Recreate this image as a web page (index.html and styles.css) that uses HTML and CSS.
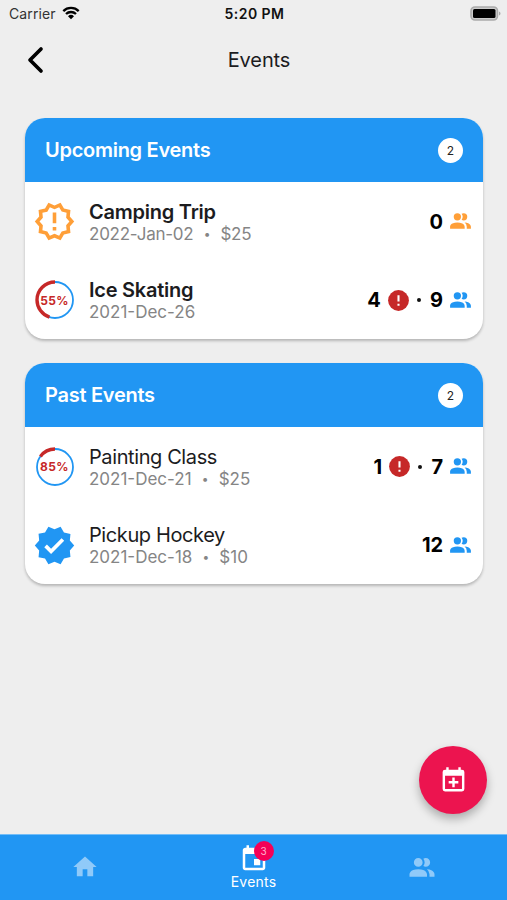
FILE: index.html
```html
<!DOCTYPE html>
<html lang="en">
<head>
<meta charset="utf-8">
<title>Events</title>
<link rel="stylesheet" href="styles.css">
</head>
<body>
<svg class="defs" aria-hidden="true">
  <symbol id="people" viewBox="0 0 24 24"><path d="M16 17v2H2v-2s0-4 7-4 7 4 7 4m-3.500-9.500a3.500 3.500 0 1 0-7 0 3.500 3.500 0 0 0 7 0m3.440 5.500A5.320 5.320 0 0 1 18 17v2h4v-2s0-3.630-6.060-4M15 4a3.390 3.390 0 0 0-1.930.59 5 5 0 0 1 0 5.820A3.390 3.390 0 0 0 15 11a3.500 3.500 0 0 0 0-7z"/></symbol>
  <symbol id="alert" viewBox="0 0 24 24"><circle cx="12" cy="12" r="10"/><path d="M11 7h2v6h-2zm0 8h2v2h-2z" fill="#fff"/></symbol>
</svg>
<div class="screen">
  <div class="status">
    <div class="carrier">Carrier
      <svg class="wifi" viewBox="0 0 18 14"><path d="M1.300 5.100a11 11 0 0 1 15.400 0M4 8a7.200 7.200 0 0 1 10 0" fill="none" stroke="#000" stroke-width="2.300"/><path d="M6 10.200a4.300 4.300 0 0 1 6 0L9 13.300z"/></svg>
    </div>
    <div class="time">5:20 PM</div>
    <svg class="battery" viewBox="0 0 31 16"><rect x="1" y="1" width="26.500" height="13" rx="4" fill="#ccc" stroke="#aaa" stroke-width="1.600"/><rect x="3" y="3" width="22.500" height="9" rx="1.500"/><path d="M29 5.500c2 .8 2 3.200 0 4z" fill="#aaa"/></svg>
  </div>
  <header class="bar">
    <svg class="back" viewBox="0 0 18 28"><path d="M15 3L4 14l11 11" fill="none" stroke="#000" stroke-width="3.700" stroke-linecap="round" stroke-linejoin="round"/></svg>
    <h1>Events</h1>
  </header>
  <main>
    <section class="card">
      <div class="card-head"><h2>Upcoming Events</h2><span class="count">2</span></div>
      <div class="row">
        <svg class="seal orange" viewBox="0 0 24 24"><path d="M23 12l-2.440-2.780.34-3.680-3.610-.82-1.890-3.180L12 3 8.600 1.540 6.710 4.720l-3.610.81.34 3.680L1 12l2.440 2.780-.34 3.690 3.610.82 1.890 3.180L12 21l3.400 1.460 1.890-3.180 3.610-.82-.34-3.680L23 12zm-4.510 2.110l.26 2.790-2.740.62-1.430 2.410L12 18.820l-2.580 1.110-1.430-2.410-2.740-.62.26-2.800L3.660 12l1.850-2.120-.26-2.780 2.740-.61 1.430-2.410L12 5.180l2.580-1.110 1.430 2.410 2.740.62-.26 2.790L20.340 12l-1.850 2.110zM11 15h2v2h-2zm0-8h2v6h-2z"/></svg>
        <div class="info strong"><h3>Camping Trip</h3><p class="tight">2022-Jan-02<i>•</i>$25</p></div>
        <div class="stats"><b>0</b><svg class="people orange"><use href="#people"/></svg></div>
      </div>
      <div class="row">
        <div class="ring"><svg viewBox="0 0 40 40"><circle class="track" cx="20" cy="20" r="18"/><circle class="due" cx="20" cy="20" r="18" pathLength="100" stroke-dasharray="0 55 45 0"/></svg><span>55%</span></div>
        <div class="info strong"><h3>Ice Skating</h3><p>2021-Dec-26</p></div>
        <div class="stats"><b>4</b><svg class="alert"><use href="#alert"/></svg><em></em><b>9</b><svg class="people"><use href="#people"/></svg></div>
      </div>
    </section>
    <section class="card">
      <div class="card-head"><h2>Past Events</h2><span class="count">2</span></div>
      <div class="row">
        <div class="ring"><svg viewBox="0 0 40 40"><circle class="track" cx="20" cy="20" r="18"/><circle class="due" cx="20" cy="20" r="18" pathLength="100" stroke-dasharray="0 85 15 0"/></svg><span>85%</span></div>
        <div class="info"><h3>Painting Class</h3><p>2021-Dec-21<i>•</i>$25</p></div>
        <div class="stats"><b>1</b><svg class="alert"><use href="#alert"/></svg><em></em><b>7</b><svg class="people"><use href="#people"/></svg></div>
      </div>
      <div class="row">
        <svg class="seal" viewBox="0 0 24 24"><path d="M23 12l-2.440-2.790.34-3.690-3.610-.82-1.890-3.200L12 2.960 8.600 1.500 6.710 4.690 3.100 5.500l.34 3.700L1 12l2.440 2.790-.34 3.700 3.610.82L8.600 22.500l3.400-1.470 3.400 1.460 1.890-3.190 3.610-.82-.34-3.690L23 12zm-12.910 4.720l-3.800-3.810 1.480-1.480 2.320 2.330 5.850-5.870 1.480 1.480-7.330 7.350z"/></svg>
        <div class="info"><h3>Pickup Hockey</h3><p>2021-Dec-18<i>•</i>$10</p></div>
        <div class="stats"><b>12</b><svg class="people"><use href="#people"/></svg></div>
      </div>
    </section>
  </main>
  <div class="fab"><svg viewBox="0 0 24 24"><path d="M19 19V8H5v11h14M16 1h2v2h1a2 2 0 0 1 2 2v14a2 2 0 0 1-2 2H5a2 2 0 0 1-2-2V5a2 2 0 0 1 2-2h1V1h2v2h8V1m-5 8.500h2v3h3v2h-3v3h-2v-3H8v-2h3z"/></svg></div>
  <nav>
    <div class="tab"><svg class="home" viewBox="0 0 24 24"><path d="M10 20v-6h4v6h5v-8h3L12 3 2 12h3v8z"/></svg></div>
    <div class="tab active"><div class="cal"><svg viewBox="0 0 24 24"><path d="M17 12h-5v5h5v-5zM16 1v2H8V1H6v2H5c-1.110 0-1.990.9-1.990 2L3 19c0 1.100.89 2 2 2h14c1.100 0 2-.9 2-2V5c0-1.100-.9-2-2-2h-1V1h-2zm3 18H5V8h14v11z"/></svg><span class="badge">3</span></div><div class="label">Events</div></div>
    <div class="tab"><svg class="group"><use href="#people"/></svg></div>
  </nav>
</div>
</body>
</html>
```
FILE: styles.css
```css
* { box-sizing: border-box; margin: 0; padding: 0; }
body { font-family: Inter, "Liberation Sans", sans-serif; color: #1c1c1e; background: #eee; }
svg { display: block; flex: none; }
.defs { position: absolute; width: 0; height: 0; }
.screen { position: relative; width: 507px; height: 900px; display: flex; flex-direction: column; overflow: hidden; }
.status { height: 28px; display: grid; grid-template-columns: 1fr auto 1fr; align-items: center; padding: 0 6px 2px 9px; }
.carrier { display: flex; align-items: center; gap: 6px; font-size: 14px; letter-spacing: .1px; color: #333; }
.wifi { width: 18px; height: 14px; }
.time { font-size: 14px; font-weight: 600; letter-spacing: .45px; color: #111; margin-left: -1px; }
.battery { width: 31px; height: 16px; justify-self: end; margin-top: 1px; }
.bar { height: 64px; display: grid; grid-template-columns: 1fr auto 1fr; align-items: center; padding: 0 15px 0 26px; }
.back { width: 18px; height: 28px; }
h1 { font-size: 20px; font-weight: 400; line-height: 24px; letter-spacing: -.1px; }
main { flex: 1; padding: 26px 24px 0 25px; display: flex; flex-direction: column; gap: 24px; }
.card { height: 221px; border-radius: 20px; background: #fff; overflow: hidden; box-shadow: 0 2px 3px rgba(0,0,0,.24); }
.card-head { height: 64px; padding: 0 20px; display: flex; align-items: center; justify-content: space-between; background: #2196f3; color: #fff; }
h2 { font-size: 20px; font-weight: 600; letter-spacing: -.27px; }
.count { width: 25px; height: 25px; border-radius: 50%; background: #fff; color: #222; font-size: 12px; line-height: 25px; text-align: center; }
.row { height: 79px; display: flex; align-items: center; padding: 0 10px 0 8px; }
.row:last-child { height: 78px; }
.seal { width: 43px; height: 43px; fill: #2196f3; }
.ring { width: 43px; height: 43px; display: grid; place-items: center; }
.ring svg { width: 40px; height: 40px; grid-area: 1 / 1; transform: rotate(-90deg); }
.ring span { grid-area: 1 / 1; font-size: 12px; font-weight: 700; letter-spacing: .4px; color: #c62828; }
.track, .due { fill: none; stroke: #2196f3; stroke-width: 1.8; }
.due { stroke: #c62828; stroke-width: 3.4; }
.info { flex: 1; padding-left: 13px; }
h3 { font-size: 20px; font-weight: 400; line-height: 24px; letter-spacing: -.4px; white-space: nowrap; }
.strong h3 { font-weight: 600; letter-spacing: -.24px; }
.info p { font-size: 17px; line-height: 20px; color: #858585; white-space: nowrap; }
.info .tight { letter-spacing: -.24px; }
.info i { display: inline-block; width: 27px; text-align: center; font-style: normal; font-size: 12px; line-height: 16px; vertical-align: 2px; }
.stats { display: flex; align-items: center; color: #000; font-size: 20px; }
.stats b { font-weight: 700; letter-spacing: -.1px; }
.people { width: 25px; height: 25px; margin-left: 5px; fill: #2196f3; }
.alert { width: 25px; height: 25px; margin-left: 5px; fill: #c62828; }
.stats em { width: 4px; height: 4px; border-radius: 50%; background: #111; margin: 0 9px 0 6.5px; }
.orange { fill: #ff9f38; }
.fab { position: absolute; right: 20px; bottom: 86px; width: 68px; height: 68px; border-radius: 50%; background: #ec144f; display: grid; place-items: center; box-shadow: 0 5px 10px rgba(0,0,0,.28); }
.fab svg { width: 29px; height: 29px; fill: #fff; }
nav { height: 66px; display: grid; grid-template-columns: repeat(3, 1fr); background: #2196f3; border-top: 1px solid #73bdf7; }
.tab { display: flex; flex-direction: column; align-items: center; justify-content: center; fill: #90caf9; }
.active { justify-content: flex-start; padding-top: 9px; fill: #fff; }
.home { width: 28px; height: 28px; margin-top: -1px; }
.group { width: 30px; height: 30px; margin-right: 2px; }
.cal { position: relative; width: 30px; height: 30px; }
.cal svg { width: 30px; height: 30px; }
.badge { position: absolute; left: 15px; top: -3px; width: 20px; height: 20px; border-radius: 50%; background: #f50057; color: #ffb3cd; font-size: 10px; line-height: 20px; text-align: center; }
.label { margin-top: -1px; color: #fff; font-size: 14px; line-height: 17px; letter-spacing: .2px; }
```
